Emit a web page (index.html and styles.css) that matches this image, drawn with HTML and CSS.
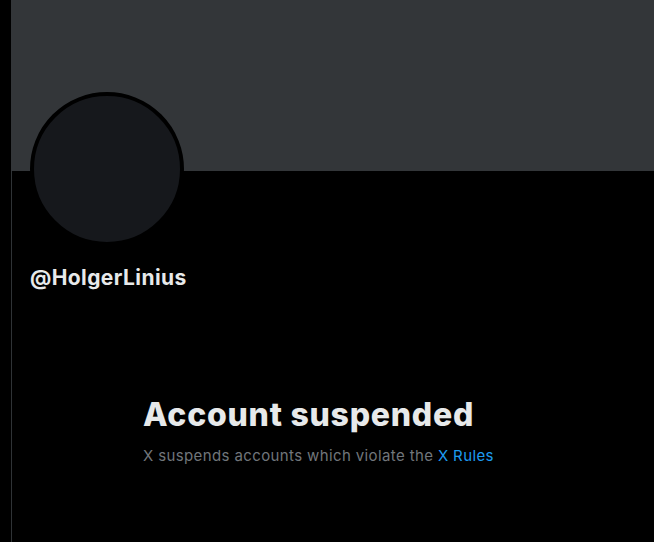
FILE: index.html
```html
<!DOCTYPE html>
<html>
<head>
<meta charset="utf-8">
<link rel="stylesheet" href="styles.css">
</head>
<body>
<div class="page">
  <main class="column">
    <div class="banner"></div>
    <div class="profile">
      <div class="avatar"></div>
      <div class="handle">@HolgerLinius</div>
    </div>
    <section class="empty">
      <h1 class="empty-title">Account suspended</h1>
      <p class="empty-text">X suspends accounts which violate the <a class="link" href="#">X Rules</a></p>
    </section>
  </main>
</div>
</body>
</html>
```

FILE: styles.css
```css
html, body {
  margin: 0;
  padding: 0;
  background: #000;
  height: 100%;
  overflow: hidden;
}
body {
  font-family: Inter, "Segoe UI", Roboto, sans-serif;
  color: #e7e9ea;
}
.page {
  padding-left: 11px;
  height: 100%;
}
.column {
  border-left: 1px solid #2f3336;
  height: 100%;
  box-sizing: border-box;
}
.banner {
  height: 171px;
  background: #333639;
  margin-left: -1px;
}
.profile {
  padding: 0 18px;
}
.avatar {
  width: 146px;
  height: 146px;
  border-radius: 50%;
  background: #16181c;
  border: 4px solid #000;
  margin-top: -79px;
}
.handle {
  font-size: 21px;
  font-weight: 700;
  line-height: 24px;
  letter-spacing: 0.4px;
  margin-top: 20px;
}
.empty {
  width: 400px;
  box-sizing: border-box;
  padding: 0 32px;
  margin: 105px 0 0 99px;
}
.empty-title {
  margin: 0;
  font-size: 32px;
  font-weight: 800;
  line-height: 40px;
  letter-spacing: 0.75px;
  color: #e7e9ea;
  white-space: nowrap;
}
.empty-text {
  margin: 11px 0 0;
  font-size: 15px;
  line-height: 20px;
  letter-spacing: 0.38px;
  color: #71767b;
  white-space: nowrap;
}
.link {
  color: #1d9bf0;
  text-decoration: none;
}
```
